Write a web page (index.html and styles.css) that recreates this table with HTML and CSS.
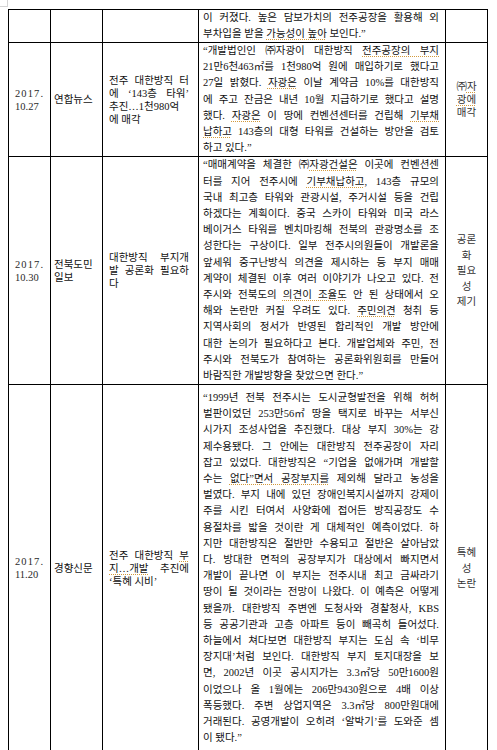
FILE: index.html
```html
<!DOCTYPE html>
<html lang="ko">
<head>
<meta charset="utf-8">
<title>대한방직 부지 보도 정리</title>
<link rel="stylesheet" href="styles.css">
</head>
<body>
<div class="page">
<div class="mark mark-left"></div>
<table class="news">
  <colgroup>
    <col class="c-date"><col class="c-src"><col class="c-title"><col class="c-body"><col class="c-tag">
  </colgroup>
  <tbody>
    <tr class="r0">
      <td class="date"></td>
      <td class="src"></td>
      <td class="title"></td>
      <td class="body">
        <span class="ln">이 커졌다. 높은 담보가치의 전주공장을 활용해 외</span>
        <span class="ln end">부차입을 받을 <span class="sp">가능성이 높아</span> 보인다.”</span>
      </td>
      <td class="tag"></td>
    </tr>
    <tr class="r1">
      <td class="date"><span class="yr">2017.</span><span class="md">10.27</span></td>
      <td class="src">연합뉴스</td>
      <td class="title">
        <span class="ln">전주 대한방직 터</span>
        <span class="ln">에 ‘143층 타워’</span>
        <span class="ln">추진…1천980억</span>
        <span class="ln end">에 매각</span>
      </td>
      <td class="body">
        <span class="ln">“개발법인인 <span class="sym">㈜</span>자광이 대한방직 <span class="sp">전주공장의 부지</span></span>
        <span class="ln">21만6천463<span class="sym">㎡</span>를 1천980억 원에 매입하기로 했다고</span>
        <span class="ln">27일 밝혔다. <span class="sp">자광은</span> 이날 계약금 10%를 대한방직</span>
        <span class="ln">에 주고 잔금은 내년 10월 지급하기로 했다고 설명</span>
        <span class="ln">했다. <span class="sp">자광은</span> 이 땅에 컨벤션센터를 건립해 <span class="sp">기부채</span></span>
        <span class="ln"><span class="sp">납하고</span> 143층의 대형 타워를 건설하는 방안을 검토</span>
        <span class="ln end">하고 있다.”</span>
      </td>
      <td class="tag">
        <span class="tl"><span class="sp"><span class="sym">㈜</span>자</span></span>
        <span class="tl"><span class="sp">광에</span></span>
        <span class="tl">매각</span>
      </td>
    </tr>
    <tr class="r2">
      <td class="date"><span class="yr">2017.</span><span class="md">10.30</span></td>
      <td class="src"><span class="tl-left">전북도민</span><span class="tl-left">일보</span></td>
      <td class="title">
        <span class="ln">대한방직 부지개</span>
        <span class="ln">발 공론화 필요하</span>
        <span class="ln end">다</span>
      </td>
      <td class="body">
        <span class="ln">“매매계약을 체결한 <span class="sym">㈜</span><span class="sp">자광건설은</span> 이곳에 컨벤션센</span>
        <span class="ln">터를 지어 전주시에 <span class="sp">기부채납하고</span>, 143층 규모의</span>
        <span class="ln">국내 최고층 타워와 관광시설, 주거시설 등을 건립</span>
        <span class="ln">하겠다는 계획이다. 중국 스카이 타워와 미국 라스</span>
        <span class="ln">베이거스 타워를 벤치마킹해 전북의 관광명소를 조</span>
        <span class="ln">성한다는 구상이다. 일부 전주시의원들이 개발론을</span>
        <span class="ln">앞세워 중구난방식 의견을 제시하는 등 부지 매매</span>
        <span class="ln">계약이 체결된 이후 여러 이야기가 나오고 있다. 전</span>
        <span class="ln">주시와 전북도의 <span class="sp">의견이 조율도</span> 안 된 상태에서 오</span>
        <span class="ln">해와 논란만 커질 우려도 있다. <span class="sp">주민의견</span> 청취 등</span>
        <span class="ln">지역사회의 정서가 반영된 합리적인 개발 방안에</span>
        <span class="ln">대한 논의가 필요하다고 본다. 개발업체와 주민, 전</span>
        <span class="ln">주시와 전북도가 참여하는 공론화위원회를 만들어</span>
        <span class="ln end">바람직한 개발방향을 찾았으면 한다.”</span>
      </td>
      <td class="tag">
        <span class="tl">공론</span>
        <span class="tl">화</span>
        <span class="tl">필요</span>
        <span class="tl">성</span>
        <span class="tl">제기</span>
      </td>
    </tr>
    <tr class="r3">
      <td class="date"><span class="yr">2017.</span><span class="md">11.20</span></td>
      <td class="src">경향신문</td>
      <td class="title">
        <span class="ln">전주 대한방직 <span class="sp">부</span></span>
        <span class="ln"><span class="sp">지…개발</span> 추진에</span>
        <span class="ln end">‘특혜 시비’</span>
      </td>
      <td class="body">
        <span class="ln">“1999년 전북 전주시는 도시균형발전을 위해 허허</span>
        <span class="ln">벌판이었던 253만56<span class="sym">㎡</span> 땅을 택지로 바꾸는 서부신</span>
        <span class="ln">시가지 조성사업을 추진했다. 대상 부지 30%는 강</span>
        <span class="ln">제수용됐다. 그 안에는 대한방직 전주공장이 자리</span>
        <span class="ln">잡고 있었다. 대한방직은 “기업을 없애가며 개발할</span>
        <span class="ln">수는 <span class="sp">없다”면서 공장부지를</span> 제외해 달라고 농성을</span>
        <span class="ln">벌였다. 부지 내에 있던 장애인복지시설까지 강제이</span>
        <span class="ln">주를 시킨 터여서 사양화에 접어든 방직공장도 수</span>
        <span class="ln">용절차를 밟을 것이란 게 대체적인 예측이었다. 하</span>
        <span class="ln">지만 대한방직은 절반만 수용되고 절반은 살아남았</span>
        <span class="ln">다. 방대한 면적의 공장부지가 대상에서 빠지면서</span>
        <span class="ln">개발이 끝나면 이 부지는 전주시내 최고 금싸라기</span>
        <span class="ln">땅이 될 것이라는 전망이 나왔다. 이 예측은 어떻게</span>
        <span class="ln">됐을까. 대한방직 주변엔 도청사와 경찰청사, KBS</span>
        <span class="ln">등 공공기관과 고층 아파트 등이 빼곡히 들어섰다.</span>
        <span class="ln">하늘에서 쳐다보면 대한방직 부지는 도심 속 ‘비무</span>
        <span class="ln">장지대’처럼 보인다. 대한방직 부지 토지대장을 보</span>
        <span class="ln">면, 2002년 이곳 공시지가는 3.3<span class="sym">㎡</span>당 50만1600원</span>
        <span class="ln">이었으나 올 1월에는 206만9430원으로 4배 이상</span>
        <span class="ln">폭등했다. 주변 상업지역은 3.3<span class="sym">㎡</span>당 800만원대에</span>
        <span class="ln">거래된다. 공영개발이 오히려 ‘알박기’를 도와준 셈</span>
        <span class="ln end">이 됐다.”</span>
      </td>
      <td class="tag">
        <span class="tl">특혜</span>
        <span class="tl">성</span>
        <span class="tl">논란</span>
      </td>
    </tr>
  </tbody>
</table>
</div>
</body>
</html>
```

FILE: styles.css
```css
html, body {
  background: #ffffff;
  margin: 0;
  padding: 0;
}

body {
  font-family: "Liberation Serif", "Noto Sans CJK KR", serif;
  font-size: 10.5px;
  color: #111111;
}

.page {
  position: relative;
  padding: 9px 0 0 8px;
  width: 480px;
}

.mark {
  position: absolute;
  top: 0;
  height: 6px;
  border-color: #d4d4d4;
  border-style: solid;
  border-width: 0;
}

.mark-left {
  left: 0;
  width: 7px;
  border-right-width: 1px;
  border-bottom-width: 1px;
}

.news {
  border-collapse: collapse;
  table-layout: fixed;
  width: 479px;
}

.c-date { width: 42px; }
.c-src { width: 52px; }
.c-title { width: 96px; }
.c-body { width: 247px; }
.c-tag { width: 42px; }

.news td {
  border: 1px solid #000;
  padding: 0;
  vertical-align: middle;
  line-height: 13px;
  overflow: visible;
}

.r0 { height: 30px; }
.r1 { height: 113px; }
.r2 { height: 226px; }
.r3 { height: 367px; }

.ln {
  display: block;
  white-space: nowrap;
  text-align: justify;
  text-align-last: justify;
  text-justify: inter-word;
}

.ln.end {
  text-align-last: left;
}

.sym {
  display: inline-block;
  text-indent: 0;
}

.news td.date {
  padding: 0 0 0 6px;
  color: #2a2a2a;
}

.date .yr,
.date .md {
  display: block;
}

.date .yr {
  letter-spacing: 1.1px;
}

.news td.src {
  padding: 0 0 0 3px;
}

.tl-left {
  display: block;
}

.news td.title {
  padding: 0 9px 0 6px;
}

.news td.body {
  padding: 0 6px 0 4px;
}

.body .ln {
  line-height: 16.2px;
}

.r0 .body .ln {
  line-height: 16px;
}

.news td.tag {
  text-align: center;
  padding: 0;
  color: #333;
}

.tl {
  display: block;
  line-height: 15.5px;
}

.r1 .tl {
  line-height: 13px;
}

.sp {
  text-decoration: underline dotted #d39a3c;
  text-underline-offset: 2px;
  text-decoration-thickness: 1px;
}
```
